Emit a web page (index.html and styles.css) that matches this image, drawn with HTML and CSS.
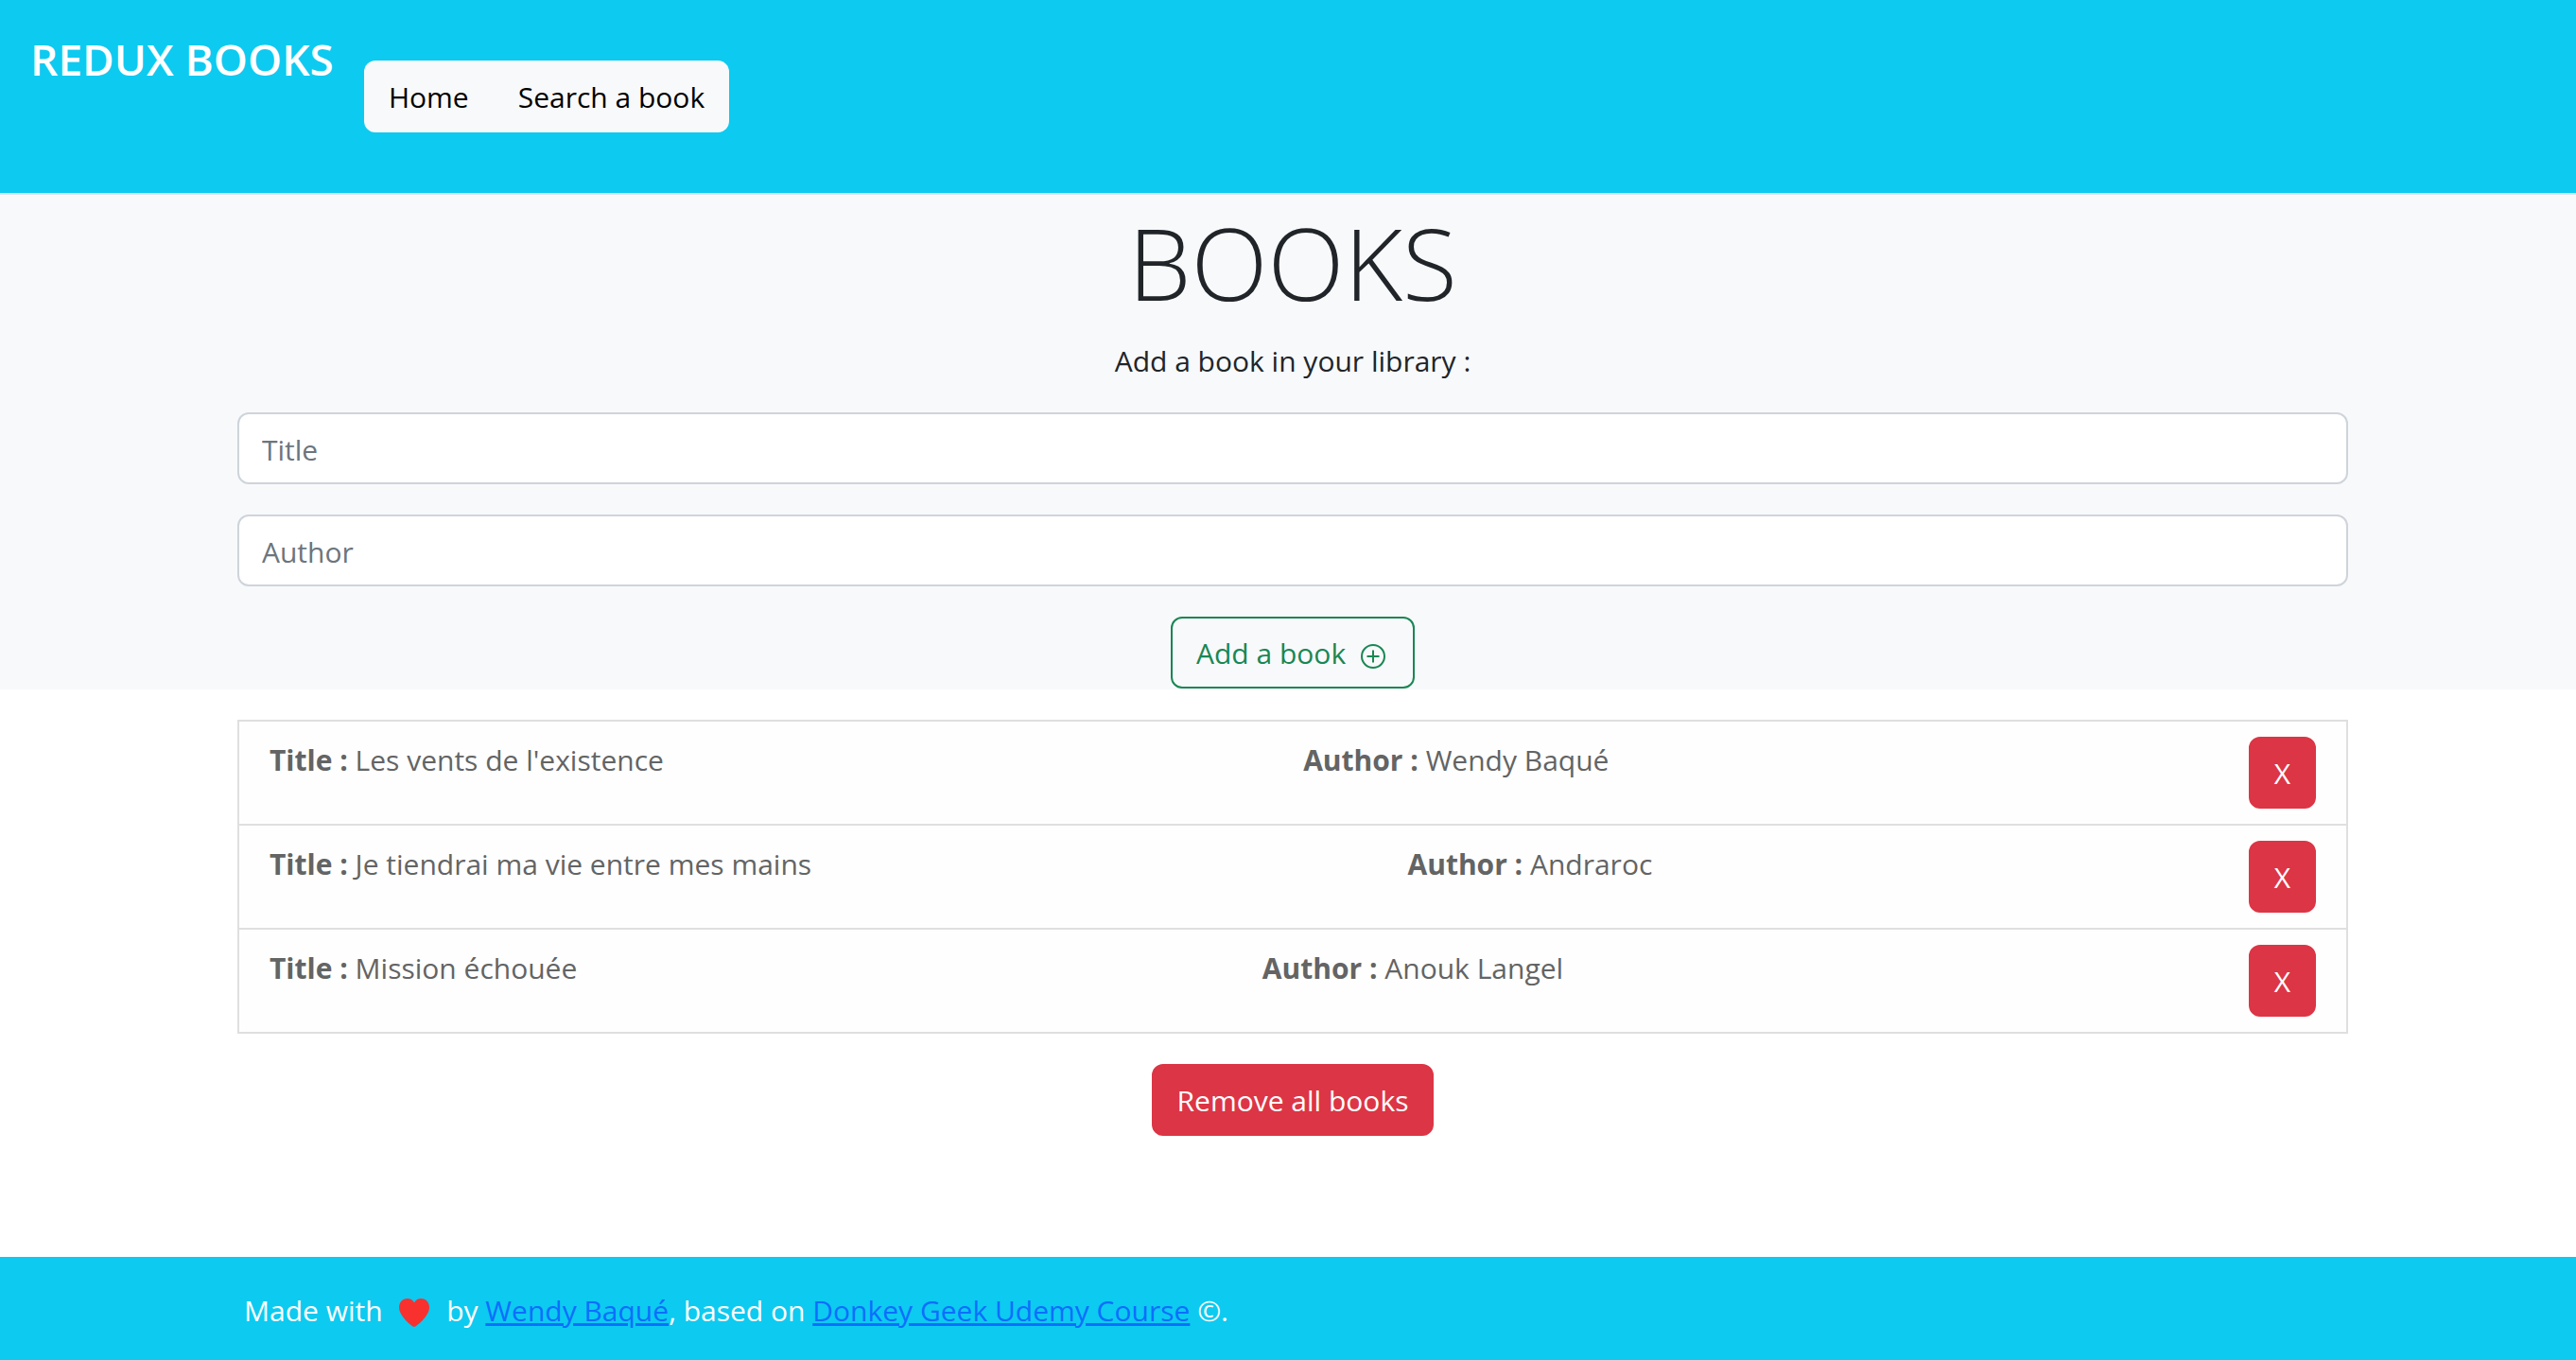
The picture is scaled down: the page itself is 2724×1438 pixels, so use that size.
FILE: index.html
```html
<!DOCTYPE html>
<html lang="en">
<head>
<meta charset="utf-8">
<meta name="viewport" content="width=device-width, initial-scale=1">
<title>Redux Books</title>
<link rel="stylesheet" href="styles.css">
</head>
<body>
<header class="navbar">
  <h2 class="brand">REDUX BOOKS</h2>
  <nav class="nav">
    <a class="nav-link" href="#home">Home</a>
    <a class="nav-link" href="#search">Search a book</a>
  </nav>
</header>
<main>
  <section class="hero">
    <div class="container">
      <h1 class="display">BOOKS</h1>
      <p class="lead">Add a book in your library :</p>
      <form class="book-form">
        <input class="field" type="text" placeholder="Title" aria-label="Title">
        <input class="field" type="text" placeholder="Author" aria-label="Author">
        <button class="btn btn-outline" type="button">Add a book
          <svg class="plus" viewBox="0 0 26 26" aria-hidden="true"><circle cx="13" cy="13" r="12"/><path d="M13 6.500v13M6.500 13h13"/></svg>
        </button>
      </form>
    </div>
  </section>
  <section class="library">
    <div class="container library-body">
      <ul class="book-list">
        <li class="book"><p class="book-info"><strong>Title :</strong> Les vents de l'existence</p><p class="book-info"><strong>Author :</strong> Wendy Baqué</p><button class="btn btn-danger" type="button">X</button></li>
        <li class="book"><p class="book-info"><strong>Title :</strong> Je tiendrai ma vie entre mes mains</p><p class="book-info"><strong>Author :</strong> Andraroc</p><button class="btn btn-danger" type="button">X</button></li>
        <li class="book"><p class="book-info"><strong>Title :</strong> Mission échouée</p><p class="book-info"><strong>Author :</strong> Anouk Langel</p><button class="btn btn-danger" type="button">X</button></li>
      </ul>
      <button class="btn btn-danger" type="button">Remove all books</button>
    </div>
  </section>
</main>
<footer class="footer">
  <p class="container credits">Made with <svg class="heart" viewBox="0 0 32 30" role="img" aria-label="love"><path d="M16 30C14 30 0 18.500 0 9.500C0 4 3.800 0 8.500 0C12 0 14.500 1.500 16 4.300C17.500 1.500 20 0 23.500 0C28.200 0 32 4 32 9.500C32 18.500 18 30 16 30Z"/></svg> by <a href="#wendy">Wendy Baqué</a>, based on <a href="#course">Donkey Geek Udemy Course</a> ©.</p>
</footer>
</body>
</html>
```
FILE: styles.css
```css
* {
  box-sizing: border-box;
}

body {
  margin: 0;
  min-height: 100vh;
  display: flex;
  flex-direction: column;
  background: #fff;
  color: #212529;
  font-family: "Open Sans", "Noto Sans", sans-serif;
  font-size: 30px;
  line-height: 48px;
}

h1,
h2,
p,
ul {
  margin: 0;
  padding: 0;
}

main {
  flex: 1;
  padding-bottom: 128px;
}

.container {
  width: 100%;
  max-width: 2232px;
  margin: 0 auto;
}

.navbar {
  display: flex;
  align-items: flex-start;
  gap: 32px;
  min-height: 204px;
  padding: 32px;
  background: #0dcaf0;
}

.brand {
  color: #fff;
  font-size: 46px;
  font-weight: 600;
  line-height: 60px;
}

.nav {
  display: flex;
  margin-top: 32px;
  padding: 15px 0 13px;
  border-radius: 12px;
  background: #f8f9fa;
}

.nav-link {
  padding: 0 26px;
  color: #000;
  text-decoration: none;
}

.hero,
.library {
  padding-left: 10px;
}

.hero {
  padding-bottom: 1px;
  border-top: 2px solid #dee2e6;
  background: #f8f9fb;
  text-align: center;
}

.display {
  padding-top: 4px;
  font-size: 106px;
  font-weight: 300;
  line-height: 134px;
}

.lead {
  margin: 14px 0 30px;
}

.book-form {
  display: flex;
  flex-direction: column;
  align-items: center;
  gap: 32px;
}

.field {
  width: 100%;
  height: 76px;
  padding: 13px 24px 11px;
  border: 2px solid #ced4da;
  border-radius: 12px;
  background: #fff;
  color: #212529;
  font: inherit;
}

.field::placeholder {
  color: #6c757d;
  opacity: 1;
}

.btn {
  padding: 13px 25px 11px;
  border: 2px solid;
  border-radius: 12px;
  font: inherit;
  cursor: pointer;
}

.btn-outline {
  border-color: #198754;
  background: transparent;
  color: #198754;
}

.btn-danger {
  border-color: #dc3545;
  background: #dc3545;
  color: #fff;
}

.plus {
  width: 26px;
  height: 26px;
  margin: 0 4px 0 8px;
  vertical-align: -5px;
  fill: none;
  stroke: currentColor;
  stroke-width: 2;
}

.library {
  padding-top: 32px;
}

.library-body {
  display: flex;
  flex-direction: column;
  align-items: center;
  gap: 32px;
}

.book-list {
  width: 100%;
  border: 2px solid #dfdfdf;
  background: #fefefe;
  color: #636464;
  list-style: none;
}

.book {
  display: flex;
  justify-content: space-between;
  align-items: flex-start;
  padding: 16px 32px;
}

.book + .book {
  border-top: 2px solid #dfdfdf;
}

.book-info {
  padding-top: 1px;
}

.footer {
  padding: 33px 0 28px;
  background: #0dcaf0;
  color: #fff;
}

.credits {
  padding-left: 12px;
}

.credits a {
  color: #0d6efd;
}

.heart {
  width: 32px;
  height: 30px;
  margin: 0 10px;
  vertical-align: -6px;
  fill: #f8312f;
}
```
